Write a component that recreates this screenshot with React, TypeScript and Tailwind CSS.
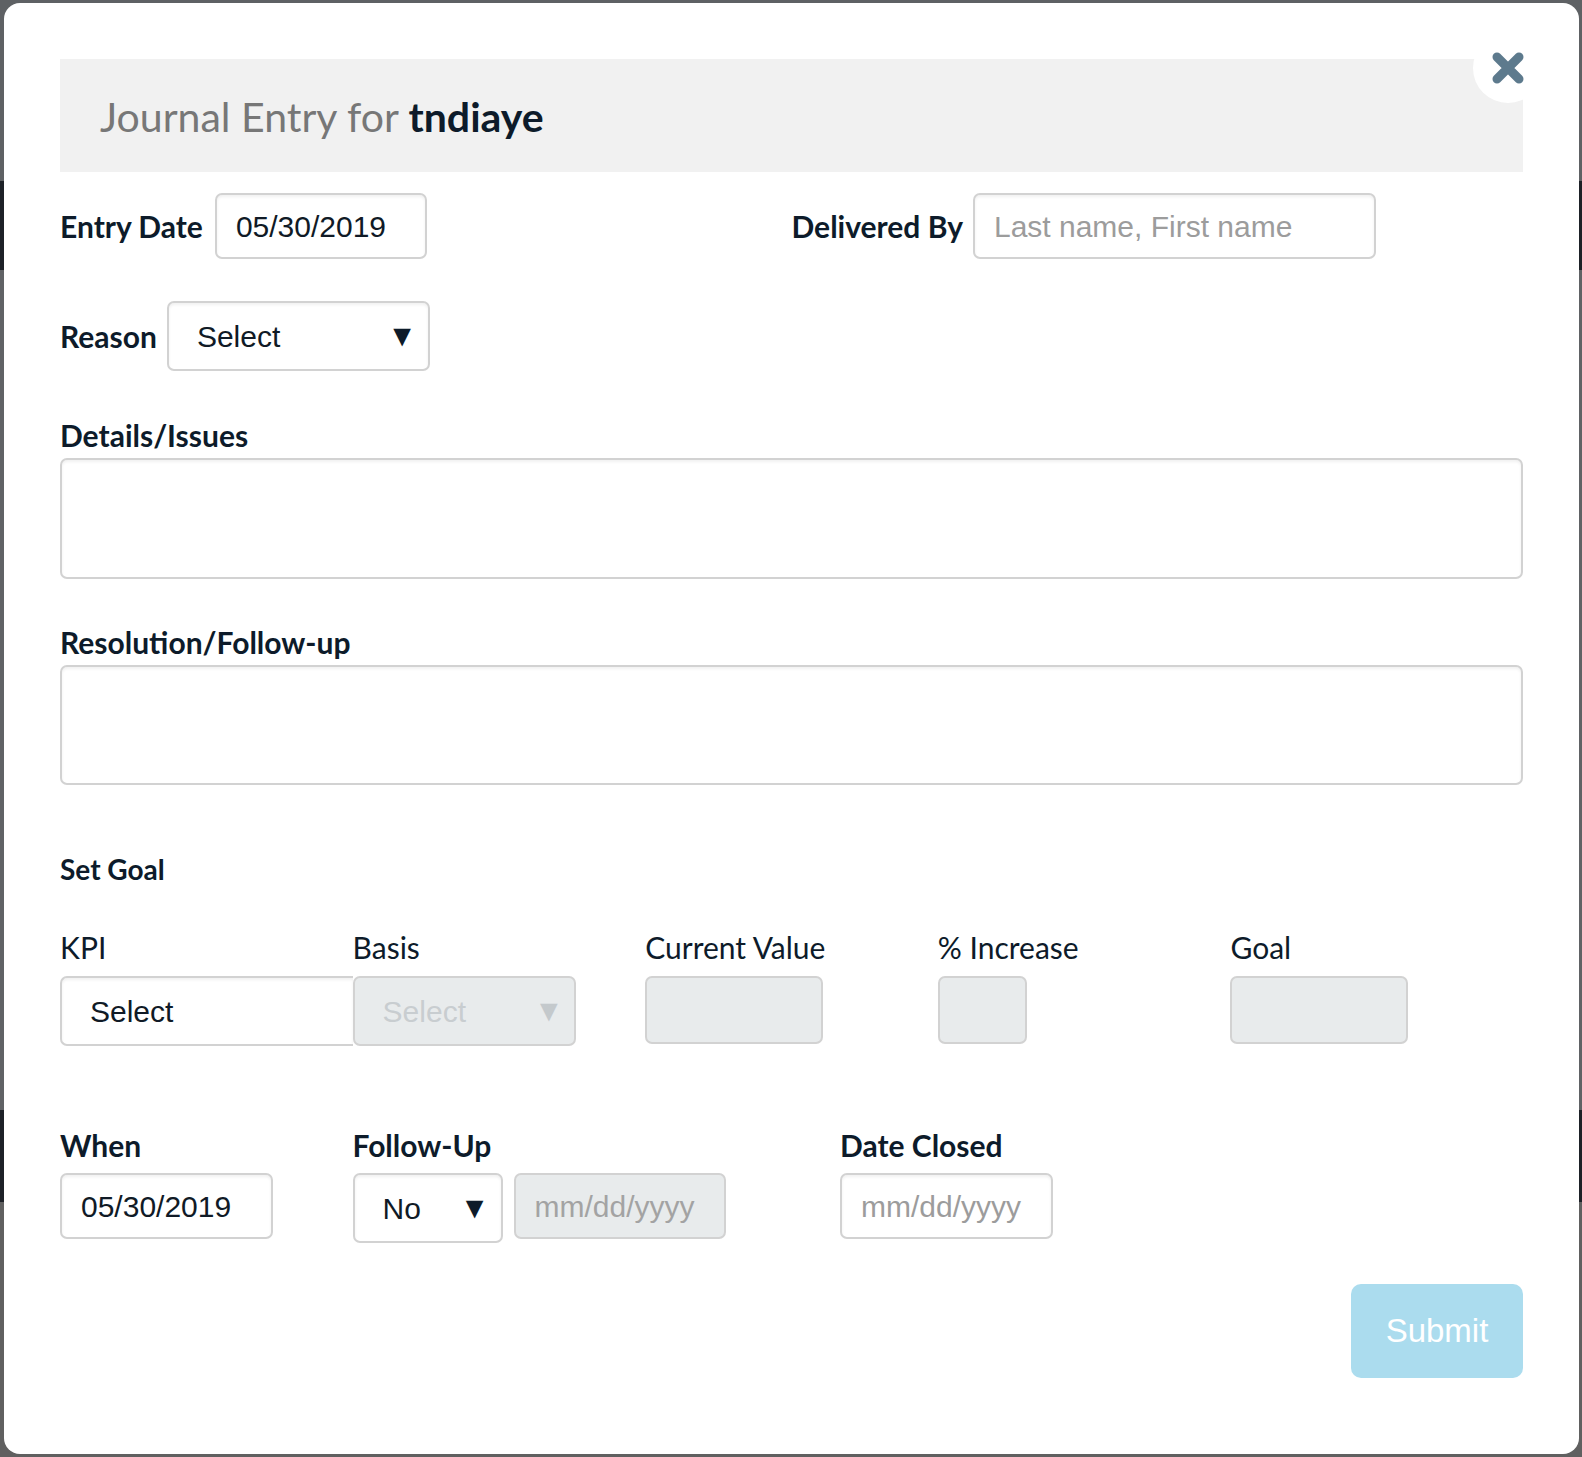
import React from "react";

const label = "font-['Lato',sans-serif] font-bold text-[30px] leading-[36px] text-[#0d1b2a]";
const softLabel = "font-['Lato',sans-serif] text-[30px] leading-[36px] text-[#0d1b2a]";
const fieldBase =
    "rounded-[7px] border-2 border-[#d2d2d2] bg-white shadow-[inset_0_2px_3px_rgba(0,0,0,0.06)] font-['Liberation_Sans',Arial,sans-serif] text-[30px] flex items-center";
const field = `${fieldBase} text-[#101a26]`;
const placeholderField = `${fieldBase} text-[#9c9c9c]`;
const disabledField =
    "rounded-[7px] border-2 border-[#d2d2d2] bg-[#e8ebec] font-['Liberation_Sans',Arial,sans-serif] text-[30px] flex items-center";

const Arrow = ({ muted }: { muted?: boolean }) => (
    <span className={`text-[30px] leading-none ${muted ? "text-[#c4c9cc]" : "text-[#0d1b2a]"}`}>▼</span>
);

const CloseIcon = () => (
    <svg width="34" height="34" viewBox="0 0 34 34">
        <path d="M6 6 L28 28 M28 6 L6 28" stroke="#5d7a8d" strokeWidth="9" strokeLinecap="round" />
    </svg>
);

export default function App() {
    return (
        <div className="relative w-full h-[1457px] overflow-hidden bg-[#5e6164]">
            {/* page behind the overlay */}
            <div className="flex flex-col">
                <div className="h-[181px]" />
                <div className="h-[89px] bg-[#1d2127]" />
                <div className="h-[840px] bg-[#606265]" />
                <div className="h-[92px] bg-[#1d2127]" />
                <div className="h-[255px] bg-[#606060]" />
            </div>

            {/* modal */}
            <div className="absolute left-[4px] top-[3px] w-[1575px] h-[1451px] rounded-[16px] bg-white px-[56px] pt-[56px]">
                <button className="absolute left-[1469px] top-[30px] w-[70px] h-[70px] rounded-full bg-white flex items-center justify-center z-10">
                    <CloseIcon />
                </button>

                <div className="h-[113px] bg-[#f1f1f1] pl-[40px] flex items-center">
                    <h1 className="font-['Lato',sans-serif] text-[41px] text-[#777777] pt-[2px]">
                        Journal Entry for <span className="font-bold text-[#0d1b2a]">tndiaye</span>
                    </h1>
                </div>

                <div className="grid grid-cols-2 mt-[21px]">
                    <div className="flex items-center gap-[12px]">
                        <span className={label}>Entry Date</span>
                        <div className={`${field} w-[212px] h-[66px] pl-[19px]`}>05/30/2019</div>
                    </div>
                    <div className="flex items-center gap-[10px]">
                        <span className={label}>Delivered By</span>
                        <div className={`${placeholderField} w-[403px] h-[66px] pl-[19px]`}>Last name, First name</div>
                    </div>
                </div>

                <div className="flex items-center gap-[10px] mt-[42px]">
                    <span className={label}>Reason</span>
                    <div className={`${field} w-[263px] h-[70px] pl-[28px] pr-[11px] justify-between`}>
                        <span>Select</span>
                        <Arrow />
                    </div>
                </div>

                <div className={`${label} mt-[46px]`}>Details/Issues</div>
                <div className={`${field} h-[121px] mt-[5px]`} />

                <div className={`${label} mt-[45px]`}>Resolution/Follow-up</div>
                <div className={`${field} h-[120px] mt-[5px]`} />

                <div className="font-['Lato',sans-serif] font-bold text-[28px] leading-[34px] text-[#0d1b2a] mt-[67px]">Set Goal</div>

                <div className="grid grid-cols-5 mt-[43px]">
                    <div className="flex flex-col gap-[11px]">
                        <span className={softLabel}>KPI</span>
                        <div className={`${field} h-[70px] pl-[28px] rounded-r-none border-r-0`}>Select</div>
                    </div>
                    <div className="flex flex-col gap-[11px]">
                        <span className={softLabel}>Basis</span>
                        <div className={`${disabledField} w-[223px] h-[70px] pl-[28px] pr-[10px] justify-between text-[#c8cdd0]`}>
                            <span>Select</span>
                            <Arrow muted />
                        </div>
                    </div>
                    <div className="flex flex-col gap-[11px]">
                        <span className={softLabel}>Current Value</span>
                        <div className={`${disabledField} w-[178px] h-[68px]`} />
                    </div>
                    <div className="flex flex-col gap-[11px]">
                        <span className={softLabel}>% Increase</span>
                        <div className={`${disabledField} w-[89px] h-[68px]`} />
                    </div>
                    <div className="flex flex-col gap-[11px]">
                        <span className={softLabel}>Goal</span>
                        <div className={`${disabledField} w-[178px] h-[68px]`} />
                    </div>
                </div>

                <div className="flex mt-[81px]">
                    <div className="w-[292.5px] flex flex-col gap-[10px]">
                        <span className={label}>When</span>
                        <div className={`${field} w-[213px] h-[66px] pl-[19px]`}>05/30/2019</div>
                    </div>
                    <div className="w-[487.5px] flex flex-col gap-[10px]">
                        <span className={label}>Follow-Up</span>
                        <div className="flex items-start gap-[11px]">
                            <div className={`${field} w-[150px] h-[70px] pl-[28px] pr-[11px] justify-between`}>
                                <span>No</span>
                                <Arrow />
                            </div>
                            <div className={`${disabledField} w-[212px] h-[66px] pl-[19px] text-[#a3a3a3]`}>mm/dd/yyyy</div>
                        </div>
                    </div>
                    <div className="flex flex-col gap-[10px]">
                        <span className={label}>Date Closed</span>
                        <div className={`${placeholderField} w-[213px] h-[66px] pl-[19px]`}>mm/dd/yyyy</div>
                    </div>
                </div>

                <div className="flex justify-end mt-[41px]">
                    <button className="w-[172px] h-[94px] rounded-[10px] bg-[#abdcee] text-white font-['Liberation_Sans',Arial,sans-serif] text-[33px]">
                        Submit
                    </button>
                </div>
            </div>
        </div>
    );
}
